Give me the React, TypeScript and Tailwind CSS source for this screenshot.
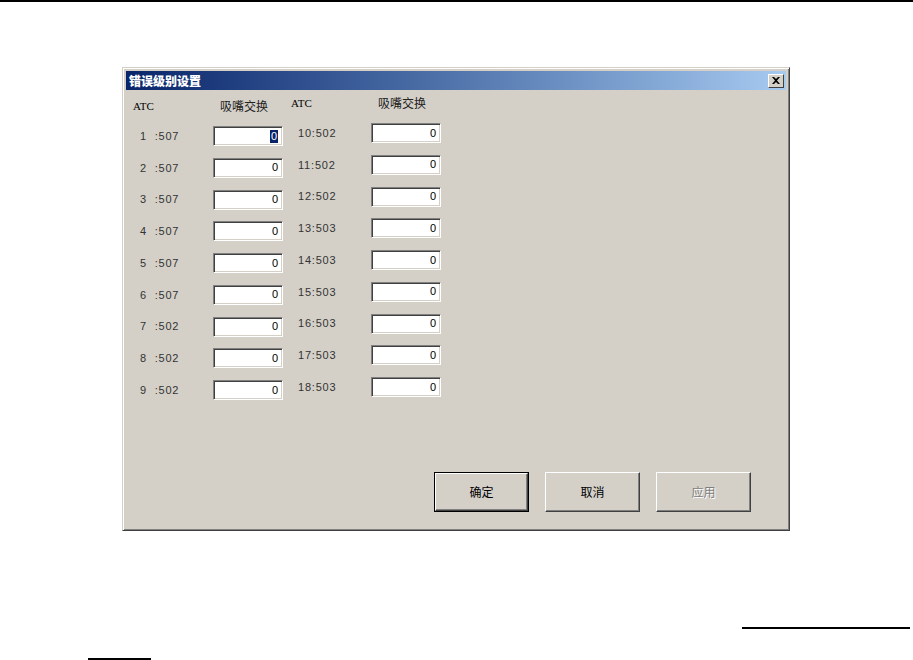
import React from 'react'

const left = ['1  :507', '2  :507', '3  :507', '4  :507', '5  :507', '6  :507', '7  :502', '8  :502', '9  :502']
const right = ['10:502', '11:502', '12:502', '13:503', '14:503', '15:503', '16:503', '17:503', '18:503']

const cjk = { fontFamily: '"Noto Sans CJK SC", "Liberation Sans", sans-serif' }
const num = { fontFamily: '"Liberation Sans", Arial, sans-serif' }

function Field({ selected }: { selected?: boolean }) {
  return (
    <div className="w-[70px] h-[20px] bg-white border border-t-[#808080] border-l-[#808080] border-b-white border-r-white shadow-[inset_1px_1px_0_#404040,inset_-1px_-1px_0_#d4d0c8] flex items-center justify-end pr-[4px]">
      {selected ? (
        <span className="bg-[#0a246a] text-white text-[11px] leading-[13px] px-[1px]" style={num}>0</span>
      ) : (
        <span className="text-[11px] leading-[13px] text-black" style={num}>0</span>
      )}
    </div>
  )
}

function Column({ labels, top, first }: { labels: string[]; top: string; first?: boolean }) {
  return (
    <div className={`flex flex-col w-[150px] ${top}`}>
      <div className="flex h-[16px] items-center">
        <span className="w-[87px] text-[11px] text-black" style={{ fontFamily: '"Liberation Serif", serif' }}>ATC</span>
        <span className="text-[12px] text-[#222]" style={cjk}>吸嘴交换</span>
      </div>
      <div className="flex flex-col gap-[11.75px] mt-[12px]">
        {labels.map((l, i) => (
          <div key={l} className="flex items-center h-[20px]">
            <span className="w-[80px] pl-[7px] text-[11px] tracking-[0.8px] text-[#333] whitespace-pre" style={num}>{l}</span>
            <Field selected={first && i === 0} />
          </div>
        ))}
      </div>
    </div>
  )
}

function Btn({ label, def, disabled }: { label: string; def?: boolean; disabled?: boolean }) {
  const inner = (
    <div className="w-full h-full bg-[#d4d0c8] border border-t-white border-l-white border-b-[#404040] border-r-[#404040] shadow-[inset_-1px_-1px_0_#808080] flex items-center justify-center">
      <span
        className={`text-[12px] ${disabled ? 'text-[#808080] [text-shadow:1px_1px_0_#fff]' : 'text-black'}`}
        style={cjk}
      >
        {label}
      </span>
    </div>
  )
  return def ? (
    <div className="w-[95px] h-[40px] border border-black">{inner}</div>
  ) : (
    <div className="w-[95px] h-[40px]">{inner}</div>
  )
}

export default function App() {
  return (
    <div className="w-[913px] h-[660px] bg-white overflow-hidden flex flex-col">
      <div className="h-[2px] bg-black w-full" />

      {/* Dialog */}
      <div className="ml-[122px] mt-[65px] w-[668px] h-[464px] bg-[#d4d0c8] border border-t-[#d4d0c8] border-l-[#d4d0c8] border-b-[#404040] border-r-[#404040] shadow-[inset_1px_1px_0_#fff,inset_-1px_-1px_0_#808080] p-[3px] flex flex-col">
        <div className="h-[19px] flex items-center justify-between pl-[3px] pr-[2px] bg-gradient-to-r from-[#0a246a] to-[#a6caf0]">
          <span className="text-white text-[12px] font-black leading-none" style={cjk}>错误级别设置</span>
          <div className="w-[16px] h-[14px] bg-[#d4d0c8] border border-t-white border-l-white border-b-[#404040] border-r-[#404040] flex items-center justify-center">
            <svg width="8" height="7" viewBox="0 0 8 7">
              <path d="M0 0h2l2 2 2-2h2L5 3.5 8 7H6L4 5 2 7H0l3-3.5z" fill="#000" />
            </svg>
          </div>
        </div>

        <div className="flex-1 flex flex-col">
          <div className="flex items-start pl-[7px] gap-[8px]">
            <Column labels={left} top="pt-[8px]" first />
            <Column labels={right} top="pt-[5px]" />
          </div>
          <div className="mt-auto flex justify-end gap-[16px] pr-[35px] pb-[15px]">
            <Btn label="确定" def />
            <Btn label="取消" />
            <Btn label="应用" disabled />
          </div>
        </div>
      </div>

      <div className="ml-[742px] mt-[96px] w-[168px] h-[2px] bg-black" />
      <div className="ml-[88px] mt-[29px] w-[63px] h-[2px] bg-black" />
    </div>
  )
}
